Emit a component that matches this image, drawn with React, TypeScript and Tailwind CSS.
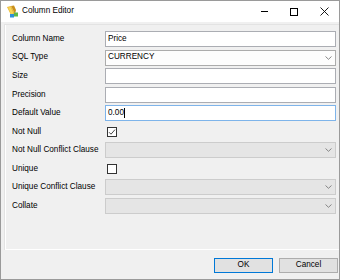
import { ReactNode } from "react";

const font = { fontFamily: '"Liberation Sans", Arial, sans-serif' };

const Chevron = () => (
  <svg width="7" height="4" viewBox="0 0 7 4" className="shrink-0">
    <path d="M0.5 0.5 L3.5 3.3 L6.5 0.5" fill="none" stroke="#7a7a7a" strokeWidth="0.9" />
  </svg>
);

const TextBox = ({ value, focused, caret }: { value?: string; focused?: boolean; caret?: boolean }) => (
  <div
    className={`h-[16px] w-[231px] flex items-center pl-[2px] bg-white border ${
      focused ? "border-[#7eb4ea]" : "border-[#abadb3]"
    }`}
  >
    <span className="text-[8.2px] text-black leading-none">{value}</span>
    {caret && <span className="w-px h-[10px] bg-black" />}
  </div>
);

const Combo = ({ value, disabled }: { value?: string; disabled?: boolean }) => (
  <div
    className={`h-[16px] w-[231px] flex items-center justify-between pl-[2px] pr-[3px] border ${
      disabled ? "bg-[#e5e5e5] border-[#cccccc]" : "bg-[#fdfdfd] border-[#acacac]"
    }`}
  >
    <span className="text-[8.2px] text-black leading-none">{value}</span>
    <Chevron />
  </div>
);

const CheckBox = ({ checked }: { checked?: boolean }) => (
  <div className="ml-[2px] w-[10px] h-[10px] bg-white border border-[#333333] flex items-center justify-center">
    {checked && (
      <svg width="8" height="8" viewBox="0 0 8 8">
        <path d="M1 4.2 L3 6.2 L7 1.6" fill="none" stroke="#333333" strokeWidth="0.9" />
      </svg>
    )}
  </div>
);

const Row = ({ label, children }: { label: string; children: ReactNode }) => (
  <div className="flex items-center h-[16px]">
    <div className="w-[93px] text-[8.2px] text-black leading-none">{label}</div>
    {children}
  </div>
);

const AppIcon = () => (
  <svg width="13" height="13" viewBox="0 0 13 13">
    <path d="M1 2 L5 1 L9 9 L5 10 Z" fill="#e9b732" />
    <path d="M2 2.5 L4.5 2 L7.5 8.5 L5 9 Z" fill="#f7d65a" />
    <path d="M5 1 L8 0.5 L10 5 L9 9 Z" fill="#c98f1c" />
    <rect x="4" y="9" width="4" height="3.5" fill="#2f8fd8" />
    <rect x="8" y="7.5" width="4" height="4" fill="#5cb848" />
  </svg>
);

const App = () => {
  return (
    <div style={font} className="w-[340px] h-[280px] bg-[#f0f0f0] border border-[#9a9a9a] flex flex-col overflow-hidden">
      <div className="h-[21px] bg-white flex items-center shrink-0">
        <div className="ml-[5px] mr-[3px]">
          <AppIcon />
        </div>
        <span className="text-[8.2px] text-black">Column Editor</span>
        <div className="ml-auto flex items-center">
          <div className="w-[30px] h-[21px] flex items-center justify-center">
            <div className="w-[7px] h-px bg-black" />
          </div>
          <div className="w-[30px] h-[21px] flex items-center justify-center">
            <div className="w-[8px] h-[8px] border border-black" />
          </div>
          <div className="w-[30px] h-[21px] flex items-center justify-center">
            <svg width="9" height="9" viewBox="0 0 9 9">
              <path d="M0.5 0.5 L8.5 8.5 M8.5 0.5 L0.5 8.5" stroke="#000" strokeWidth="0.9" />
            </svg>
          </div>
        </div>
      </div>

      <div className="mt-[2px] ml-[3px] mr-[-4px] h-[226px] border-t border-l border-[#e3e3e3] shrink-0">
        <div className="h-full border-b border-white border-l border-l-white pt-[6px] pl-[6px] flex flex-col gap-[2.55px]">
          <Row label="Column Name">
            <TextBox value="Price" />
          </Row>
          <Row label="SQL Type">
            <Combo value="CURRENCY" />
          </Row>
          <Row label="Size">
            <TextBox />
          </Row>
          <Row label="Precision">
            <TextBox />
          </Row>
          <Row label="Default Value">
            <TextBox value="0.00" focused caret />
          </Row>
          <Row label="Not Null">
            <CheckBox checked />
          </Row>
          <Row label="Not Null Conflict Clause">
            <Combo disabled />
          </Row>
          <Row label="Unique">
            <CheckBox />
          </Row>
          <Row label="Unique Conflict Clause">
            <Combo disabled />
          </Row>
          <Row label="Collate">
            <Combo disabled />
          </Row>
        </div>
      </div>

      <div className="flex justify-end gap-[6px] pr-[1px] mt-[8px]">
        <button className="w-[59px] h-[15px] bg-[#e1e1e1] border border-[#0078d7] text-[8.2px] text-black leading-none">
          OK
        </button>
        <button className="w-[59px] h-[15px] bg-[#e1e1e1] border border-[#adadad] text-[8.2px] text-black leading-none">
          Cancel
        </button>
      </div>
    </div>
  );
};

export default App;
